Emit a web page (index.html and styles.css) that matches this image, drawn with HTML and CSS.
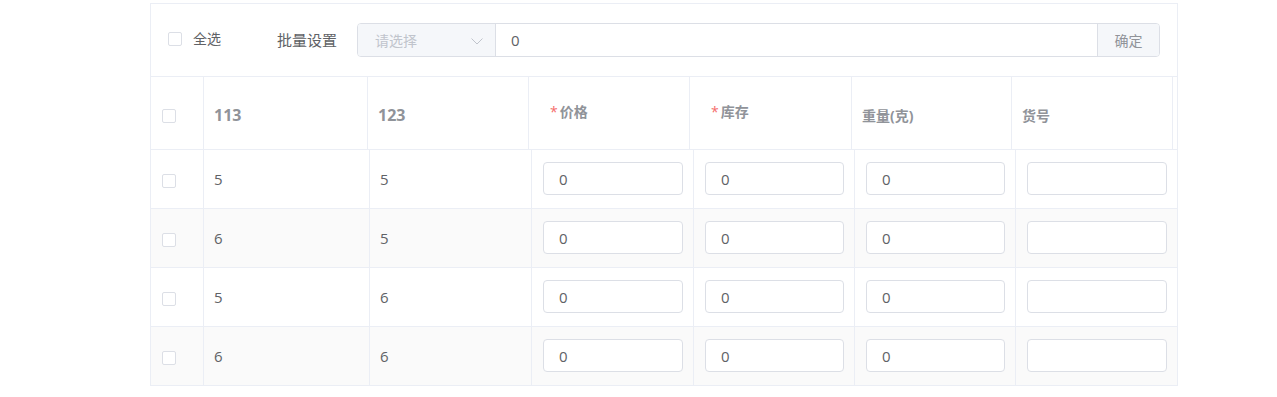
FILE: index.html
```html
<!DOCTYPE html>
<html lang="zh-CN">
<head>
<meta charset="utf-8">
<title>SKU</title>
<link rel="stylesheet" href="styles.css">
</head>
<body>
<div class="panel">
  <div class="toolbar">
    <label class="check-all"><span class="checkbox"></span><span class="check-text">全选</span></label>
    <span class="batch-label">批量设置</span>
    <div class="group">
      <div class="prepend">
        <span class="placeholder">请选择</span>
        <svg class="chevron" width="12" height="7" viewBox="0 0 12 7"><path d="M0.5 0.5 L6 6 L11.5 0.5" fill="none" stroke="#c0c4cc" stroke-width="1"/></svg>
      </div>
      <div class="group-input">0</div>
      <div class="append">确定</div>
    </div>
  </div>
  <div class="thead">
    <div class="th th-check"><span class="checkbox"></span></div>
    <div class="th th-num">113</div>
    <div class="th th-num">123</div>
    <div class="th th-req"><span class="req-label"><span class="star">*</span>价格</span></div>
    <div class="th th-req"><span class="req-label"><span class="star">*</span>库存</span></div>
    <div class="th">重量(克)</div>
    <div class="th">货号</div>
    <div class="gutter"></div>
  </div>
  <div class="tbody">
    <div class="tr">
      <div class="td td-check"><span class="checkbox"></span></div>
      <div class="td">5</div>
      <div class="td">5</div>
      <div class="td td-input"><div class="cell-input">0</div></div>
      <div class="td td-input"><div class="cell-input">0</div></div>
      <div class="td td-input"><div class="cell-input">0</div></div>
      <div class="td td-input td-last"><div class="cell-input"></div></div>
    </div>
    <div class="tr tr-stripe">
      <div class="td td-check"><span class="checkbox"></span></div>
      <div class="td">6</div>
      <div class="td">5</div>
      <div class="td td-input"><div class="cell-input">0</div></div>
      <div class="td td-input"><div class="cell-input">0</div></div>
      <div class="td td-input"><div class="cell-input">0</div></div>
      <div class="td td-input td-last"><div class="cell-input"></div></div>
    </div>
    <div class="tr">
      <div class="td td-check"><span class="checkbox"></span></div>
      <div class="td">5</div>
      <div class="td">6</div>
      <div class="td td-input"><div class="cell-input">0</div></div>
      <div class="td td-input"><div class="cell-input">0</div></div>
      <div class="td td-input"><div class="cell-input">0</div></div>
      <div class="td td-input td-last"><div class="cell-input"></div></div>
    </div>
    <div class="tr tr-stripe">
      <div class="td td-check"><span class="checkbox"></span></div>
      <div class="td">6</div>
      <div class="td">6</div>
      <div class="td td-input"><div class="cell-input">0</div></div>
      <div class="td td-input"><div class="cell-input">0</div></div>
      <div class="td td-input"><div class="cell-input">0</div></div>
      <div class="td td-input td-last"><div class="cell-input"></div></div>
    </div>
  </div>
</div>
</body>
</html>
```

FILE: styles.css
```css
* { box-sizing: border-box; }

body {
  margin: 0;
  background: #ffffff;
  font-family: "Open Sans", "Noto Sans CJK SC", sans-serif;
  font-size: 14px;
  color: #606266;
}

.panel {
  margin: 3px 0 0 150px;
  width: 1028px;
  border: 1px solid #ebeef5;
}

.toolbar {
  height: 73px;
  display: flex;
  align-items: center;
  padding: 0 17px;
  border-bottom: 1px solid #ebeef5;
}

.checkbox {
  display: inline-block;
  width: 14px;
  height: 14px;
  border: 1px solid #dcdfe6;
  border-radius: 2px;
  background: #fff;
  flex: none;
}

.check-all {
  display: flex;
  align-items: center;
  margin-bottom: 3px;
}

.check-text {
  margin-left: 11px;
  font-size: 14px;
  line-height: 20px;
  color: #606266;
}

.batch-label {
  margin-left: 56px;
  margin-right: 20px;
  font-size: 15px;
  line-height: 20px;
  color: #606266;
}

.group {
  flex: 1;
  display: flex;
  height: 34px;
  border: 1px solid #dcdfe6;
  border-radius: 4px;
  overflow: hidden;
}

.prepend {
  width: 138px;
  background: #f5f7fa;
  border-right: 1px solid #dcdfe6;
  display: flex;
  align-items: center;
  justify-content: space-between;
  padding: 0 12px 0 17px;
}

.placeholder {
  color: #c0c4cc;
  font-size: 14px;
}

.chevron {
  margin-top: 3px;
}

.group-input {
  flex: 1;
  display: flex;
  align-items: center;
  padding: 0 15px;
  color: #606266;
  font-size: 15px;
}

.append {
  width: 62px;
  border-left: 1px solid #dcdfe6;
  background: #f5f7fa;
  display: flex;
  align-items: center;
  justify-content: center;
  color: #909399;
  font-size: 14px;
}

.thead {
  display: grid;
  grid-template-columns: 53px 164px 161px 161px 162px 160px 161px 4px;
  height: 73px;
  border-bottom: 1px solid #ebeef5;
}

.th {
  display: flex;
  align-items: center;
  padding: 4px 10px 0 10px;
  border-right: 1px solid #ebeef5;
  font-weight: bold;
  color: #909399;
  font-size: 14px;
}

.th-num {
  font-size: 16px;
}

.th-check {
  padding: 6px 0 0 11px;
}

.th-req {
  padding: 0 10px 4px 21px;
}

.star {
  color: #f56c6c;
  margin-right: 2px;
  font-weight: normal;
}

.tr {
  display: grid;
  grid-template-columns: 53px 166px 162px 162px 161px 161px 161px;
  height: 59px;
  border-bottom: 1px solid #ebeef5;
}

.tr:last-child {
  height: 58px;
  border-bottom: none;
}

.tr-stripe {
  background: #fafafa;
}

.td {
  display: flex;
  align-items: center;
  padding: 0 10px;
  border-right: 1px solid #ebeef5;
  color: #606266;
  font-size: 15px;
}

.td-check {
  padding: 3px 0 0 11px;
}

.td-input {
  padding: 0 10px 1px 11px;
}

.td-last {
  border-right: none;
}

.cell-input {
  width: 100%;
  height: 33px;
  border: 1px solid #dcdfe6;
  border-radius: 4px;
  background: #fff;
  display: flex;
  align-items: center;
  padding: 0 15px;
  color: #606266;
  font-size: 15px;
}
```
